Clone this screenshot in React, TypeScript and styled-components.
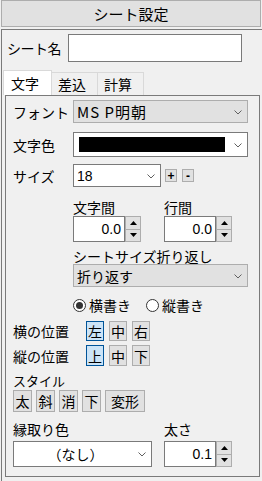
import React from 'react';
import styled, { createGlobalStyle } from 'styled-components';

const Global = createGlobalStyle`
  * { box-sizing: border-box; }
  html, body { margin: 0; padding: 0; background: #f0f0f0; }
  body {
    font-family: "Noto Sans CJK JP", "Noto Sans", sans-serif;
    font-size: 14px;
    color: #000;
  }
  svg { display: block; }
`;

const Window = styled.div`
  width: 262px;
  height: 481px;
  display: flex;
  flex-direction: column;
  background: #f0f0f0;
  overflow: hidden;
`;

const TitleBar = styled.div`
  margin: 0 1px;
  height: 27px;
  flex: none;
  border: 1px solid #adadad;
  background: #e1e1e1;
  display: flex;
  align-items: center;
  justify-content: center;
  font-size: 15px;
  line-height: 1;
`;

const Body = styled.div`
  margin-top: 2px;
  margin-left: 1px;
  flex: 1;
  border-top: 1px solid #7a7a7a;
  border-left: 1px solid #7a7a7a;
  display: flex;
  flex-direction: column;
  padding: 4px 0 0 0;
`;

const NameRow = styled.div`
  display: flex;
  align-items: center;
  height: 28px;
  padding-left: 5px;
`;

const NameLabel = styled.span`
  width: 61px;
  font-size: 14px;
  line-height: 16px;
  letter-spacing: -0.5px;
`;

const TextInput = styled.div`
  width: 174px;
  height: 28px;
  background: #fff;
  border: 1px solid #7a7a7a;
`;

const TabBar = styled.div`
  margin-top: 8px;
  margin-left: 1px;
  height: 25px;
  display: flex;
  align-items: flex-end;
`;

const Tab = styled.div<{ $active?: boolean; $w: number }>`
  width: ${(p) => p.$w}px;
  height: ${(p) => (p.$active ? 25 : 23)}px;
  background: ${(p) => (p.$active ? '#ffffff' : '#f0f0f0')};
  border: 1px solid #d9d9d9;
  border-bottom: none;
  margin-left: ${(p) => (p.$active ? 0 : -1)}px;
  display: flex;
  align-items: center;
  padding-left: ${(p) => (p.$active ? 7 : 6)}px;
  font-size: 14px;
  line-height: 16px;
  &:first-child { margin-left: 0; }
`;

const Panel = styled.div`
  margin-left: 3px;
  width: 255px;
  height: 382px;
  border: 1px solid #7a7a7a;
  padding: 4px 0 0 7px;
  display: flex;
  flex-direction: column;
`;

const Row = styled.div<{ $h: number; $mt?: number; $label?: number }>`
  display: grid;
  grid-template-columns: ${(p) => p.$label ?? 60}px auto;
  align-items: center;
  height: ${(p) => p.$h}px;
  margin-top: ${(p) => p.$mt ?? 0}px;
`;

const Label = styled.span`
  font-size: 14px;
  line-height: 16px;
  white-space: nowrap;
`;

const SelectBox = styled.div<{ $w: number; $h: number; $gray?: boolean; $center?: boolean }>`
  position: relative;
  width: ${(p) => p.$w}px;
  height: ${(p) => p.$h}px;
  background: ${(p) => (p.$gray ? '#e1e1e1' : '#ffffff')};
  border: 1px solid ${(p) => (p.$gray ? '#adadad' : '#7a7a7a')};
  display: flex;
  align-items: center;
  justify-content: ${(p) => (p.$center ? 'center' : 'flex-start')};
  padding: ${(p) => (p.$center ? '0 14px 0 0' : '0 0 0 3px')};
  font-size: 14px;
  line-height: 16px;
  white-space: nowrap;
`;

const SelectText = styled.span<{ $spaced?: boolean }>`
  letter-spacing: ${(p) => (p.$spaced ? '1px' : '0')};
  font-size: ${(p) => (p.$spaced ? 15 : 14)}px;
`;

const NumText = styled.span`
  font-family: "Liberation Sans", Arial, sans-serif;
  font-size: 14px;
`;

const ChevronWrap = styled.span`
  position: absolute;
  right: 5px;
  top: 50%;
  margin-top: -2px;
  width: 8px;
  height: 5px;
  display: block;
  line-height: 0;
`;

const Chevron = () => (
  <ChevronWrap>
    <svg width="8" height="5" viewBox="0 0 8 5">
      <path d="M0.5 0.5 L4 4 L7.5 0.5" fill="none" stroke="#606060" strokeWidth="1" />
    </svg>
  </ChevronWrap>
);

const ColorSwatch = styled.div`
  width: 146px;
  height: 15px;
  background: #000;
  margin-left: 2px;
`;

const SizeWrap = styled.div`
  display: flex;
  align-items: center;
`;

const TinyButton = styled.div<{ $ml: number }>`
  width: 12px;
  height: 13px;
  margin-left: ${(p) => p.$ml}px;
  background: #e1e1e1;
  border: 1px solid #adadad;
  display: flex;
  align-items: center;
  justify-content: center;
  font-family: "Liberation Sans", Arial, sans-serif;
  font-size: 12px;
  font-weight: bold;
  line-height: 1;
`;

const Indent = styled.div<{ $mt: number }>`
  margin-left: 60px;
  margin-top: ${(p) => p.$mt}px;
  display: flex;
  flex-direction: column;
`;

const SpinRow = styled.div`
  display: flex;
`;

const SpinField = styled.div<{ $w: number }>`
  width: ${(p) => p.$w}px;
  display: flex;
  flex-direction: column;
`;

const FieldLabel = styled.span<{ $h?: number }>`
  height: ${(p) => p.$h ?? 16}px;
  font-size: 14px;
  line-height: 16px;
  white-space: nowrap;
`;

const Spin = styled.div<{ $mt?: number }>`
  display: flex;
  height: 26px;
  margin-top: ${(p) => p.$mt ?? 0}px;
`;

const SpinInput = styled.div`
  width: 52px;
  height: 26px;
  background: #fff;
  border: 1px solid #7a7a7a;
  display: flex;
  align-items: center;
  justify-content: flex-end;
  padding-right: 3px;
`;

const SpinButtons = styled.div`
  width: 16px;
  height: 26px;
  display: flex;
  flex-direction: column;
`;

const SpinBtn = styled.div`
  flex: 1;
  background: #e1e1e1;
  border: 1px solid #adadad;
  display: flex;
  align-items: center;
  justify-content: center;
  & + & { border-top: none; }
`;

const Arrow = ({ up }: { up?: boolean }) => (
  <svg width="7" height="4" viewBox="0 0 7 4">
    <path d={up ? 'M0 4 L3.5 0 L7 4 Z' : 'M0 0 L3.5 4 L7 0 Z'} fill="#000" />
  </svg>
);

const SpinBox = ({ value, mt }: { value: string; mt?: number }) => (
  <Spin $mt={mt}>
    <SpinInput>
      <NumText>{value}</NumText>
    </SpinInput>
    <SpinButtons>
      <SpinBtn>
        <Arrow up />
      </SpinBtn>
      <SpinBtn>
        <Arrow />
      </SpinBtn>
    </SpinButtons>
  </Spin>
);

const RadioRow = styled.div`
  margin-left: 60px;
  margin-top: 10px;
  height: 16px;
  display: flex;
  align-items: center;
`;

const RadioItem = styled.div<{ $w: number }>`
  width: ${(p) => p.$w}px;
  display: flex;
  align-items: center;
  gap: 3px;
  font-size: 14px;
  line-height: 16px;
`;

const RadioCircle = styled.span<{ $checked?: boolean }>`
  width: 13px;
  height: 13px;
  border-radius: 50%;
  border: 1px solid #333;
  background: #fff;
  display: flex;
  align-items: center;
  justify-content: center;
  &::after {
    content: '';
    width: 7px;
    height: 7px;
    border-radius: 50%;
    background: ${(p) => (p.$checked ? '#333' : 'transparent')};
  }
`;

const BtnGroup = styled.div<{ $gap: number }>`
  display: flex;
  gap: ${(p) => p.$gap}px;
`;

const CharButton = styled.div<{ $active?: boolean; $w?: number; $h: number }>`
  width: ${(p) => p.$w ?? 18}px;
  height: ${(p) => p.$h}px;
  background: ${(p) => (p.$active ? '#cce4f7' : '#e1e1e1')};
  border: 1px solid ${(p) => (p.$active ? '#005499' : '#adadad')};
  display: flex;
  align-items: center;
  justify-content: center;
  font-size: 14px;
  line-height: 16px;
  overflow: hidden;
`;

const StyleLabel = styled.div<{ $mt: number; $h: number }>`
  margin-top: ${(p) => p.$mt}px;
  height: ${(p) => p.$h}px;
  font-size: 13px;
  line-height: 14px;
`;

const BottomRow = styled.div`
  display: flex;
  margin-top: 9px;
`;

export default function App() {
  return (
    <>
      <Global />
      <Window>
        <TitleBar>シート設定</TitleBar>
        <Body>
          <NameRow>
            <NameLabel>シート名</NameLabel>
            <TextInput />
          </NameRow>
          <TabBar>
            <Tab $active $w={49}>文字</Tab>
            <Tab $w={47}>差込</Tab>
            <Tab $w={47}>計算</Tab>
          </TabBar>
          <Panel>
            <Row $h={23}>
              <Label>フォント</Label>
              <SelectBox $w={175} $h={23} $gray>
                <SelectText $spaced>MS P明朝</SelectText>
                <Chevron />
              </SelectBox>
            </Row>
            <Row $h={25} $mt={9}>
              <Label>文字色</Label>
              <SelectBox $w={175} $h={25}>
                <ColorSwatch />
                <Chevron />
              </SelectBox>
            </Row>
            <Row $h={23} $mt={7}>
              <Label>サイズ</Label>
              <SizeWrap>
                <SelectBox $w={88} $h={23}>
                  <NumText>18</NumText>
                  <Chevron />
                </SelectBox>
                <TinyButton $ml={4}>+</TinyButton>
                <TinyButton $ml={5}>-</TinyButton>
              </SizeWrap>
            </Row>
            <Indent $mt={12}>
              <SpinRow>
                <SpinField $w={91}>
                  <FieldLabel>文字間</FieldLabel>
                  <SpinBox value="0.0" mt={1} />
                </SpinField>
                <SpinField $w={70}>
                  <FieldLabel>行間</FieldLabel>
                  <SpinBox value="0.0" mt={1} />
                </SpinField>
              </SpinRow>
            </Indent>
            <Indent $mt={6}>
              <FieldLabel>シートサイズ折り返し</FieldLabel>
              <SelectBox $w={175} $h={23} $gray>
                <SelectText>折り返す</SelectText>
                <Chevron />
              </SelectBox>
            </Indent>
            <RadioRow>
              <RadioItem $w={73}>
                <RadioCircle $checked />
                横書き
              </RadioItem>
              <RadioItem $w={80}>
                <RadioCircle />
                縦書き
              </RadioItem>
            </RadioRow>
            <Row $h={20} $mt={8} $label={73}>
              <Label>横の位置</Label>
              <BtnGroup $gap={5}>
                <CharButton $h={20} $active>左</CharButton>
                <CharButton $h={20}>中</CharButton>
                <CharButton $h={20}>右</CharButton>
              </BtnGroup>
            </Row>
            <Row $h={21} $mt={4} $label={73}>
              <Label>縦の位置</Label>
              <BtnGroup $gap={5}>
                <CharButton $h={21} $active>上</CharButton>
                <CharButton $h={21}>中</CharButton>
                <CharButton $h={21}>下</CharButton>
              </BtnGroup>
            </Row>
            <StyleLabel $mt={8} $h={16}>スタイル</StyleLabel>
            <BtnGroup $gap={4}>
              <CharButton $h={22} $w={19}>太</CharButton>
              <CharButton $h={22} $w={19}>斜</CharButton>
              <CharButton $h={22} $w={19}>消</CharButton>
              <CharButton $h={22} $w={19}>下</CharButton>
              <CharButton $h={22} $w={40}>変形</CharButton>
            </BtnGroup>
            <BottomRow>
              <SpinField $w={151}>
                <FieldLabel $h={20}>縁取り色</FieldLabel>
                <SelectBox $w={139} $h={26} $center>
                  <SelectText>（なし）</SelectText>
                  <Chevron />
                </SelectBox>
              </SpinField>
              <SpinField $w={70}>
                <FieldLabel $h={20}>太さ</FieldLabel>
                <SpinBox value="0.1" />
              </SpinField>
            </BottomRow>
          </Panel>
        </Body>
      </Window>
    </>
  );
}
